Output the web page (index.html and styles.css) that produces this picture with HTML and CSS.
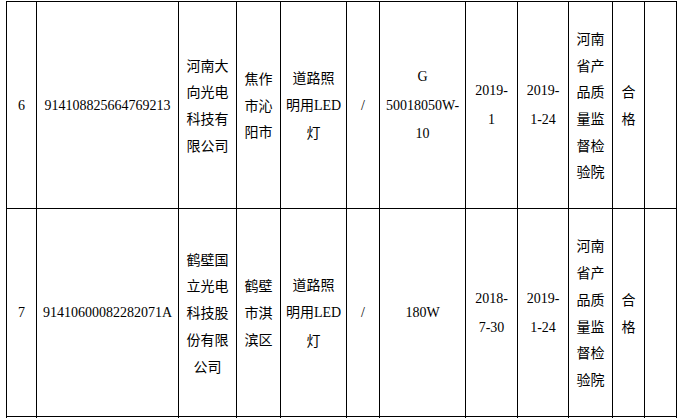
FILE: index.html
```html
<!DOCTYPE html>
<html lang="zh">
<head>
<meta charset="utf-8">
<link rel="stylesheet" href="styles.css">
<title>抽查结果</title>
</head>
<body>
<table class="grid">
  <colgroup>
    <col class="c-no"><col class="c-code"><col class="c-name"><col class="c-city"><col class="c-prod"><col class="c-brand"><col class="c-model"><col class="c-date"><col class="c-date2"><col class="c-org"><col class="c-res"><col class="c-extra">
  </colgroup>
  <tr class="r1">
    <td><span class="num">6</span></td>
    <td><span class="num">914108825664769213</span></td>
    <td>河南大<br>向光电<br>科技有<br>限公司</td>
    <td>焦作<br>市沁<br>阳市</td>
    <td>道路照<br>明用<span class="num">LED</span><br>灯</td>
    <td><span class="num">/</span></td>
    <td><span class="num">G<br>50018050W-<br>10</span></td>
    <td><span class="num">2019-<br>1</span></td>
    <td><span class="num">2019-<br>1-24</span></td>
    <td>河南<br>省产<br>品质<br>量监<br>督检<br>验院</td>
    <td>合<br>格</td>
    <td></td>
  </tr>
  <tr class="r2">
    <td><span class="num">7</span></td>
    <td><span class="num">91410600082282071A</span></td>
    <td>鹤壁国<br>立光电<br>科技股<br>份有限<br>公司</td>
    <td>鹤壁<br>市淇<br>滨区</td>
    <td>道路照<br>明用<span class="num">LED</span><br>灯</td>
    <td><span class="num">/</span></td>
    <td><span class="num">180W</span></td>
    <td><span class="num">2018-<br>7-30</span></td>
    <td><span class="num">2019-<br>1-24</span></td>
    <td>河南<br>省产<br>品质<br>量监<br>督检<br>验院</td>
    <td>合<br>格</td>
    <td></td>
  </tr>
  <tr class="r3">
    <td></td><td></td><td></td><td></td><td></td><td></td><td></td><td></td><td></td><td></td><td></td><td></td>
  </tr>
</table>
</body>
</html>
```

FILE: styles.css
```css
html, body {
  margin: 0;
  padding: 0;
  background: #ffffff;
}

body {
  padding: 1px 0 0 6px;
  font-family: "Noto Sans CJK SC", "Liberation Serif", sans-serif;
  font-size: 14px;
  color: #000000;
}

.grid {
  border-collapse: collapse;
  table-layout: fixed;
  width: 671px;
}

.grid td {
  border: 1px solid #000000;
  padding: 0 4px;
  text-align: center;
  vertical-align: middle;
  line-height: 26.7px;
  white-space: nowrap;
  overflow: hidden;
}

.num {
  font-family: "Liberation Serif", "DejaVu Serif", serif;
  font-size: 14px;
}

.c-no { width: 30px; }
.c-code { width: 142px; }
.c-name { width: 58px; }
.c-city { width: 44px; }
.c-prod { width: 66px; }
.c-brand { width: 33px; }
.c-model { width: 86px; }
.c-date { width: 52px; }
.c-date2 { width: 51px; }
.c-org { width: 44px; }
.c-res { width: 32px; }
.c-extra { width: 32px; }

.r1 { height: 207px; }
.r2 { height: 208px; }
.r3 { height: 20px; }
```
